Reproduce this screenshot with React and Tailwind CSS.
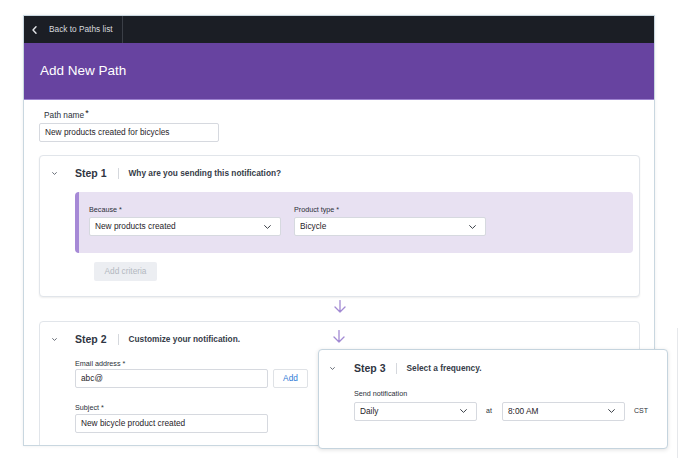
import React from "react";

function Chevron({ w = 7, h = 4, color = "#3a3f47", sw = 1 }) {
  return (
    <svg width={w} height={h} viewBox={`0 0 ${w} ${h}`} className="block">
      <path d={`M0.6 0.6 L${w / 2} ${h - 0.6} L${w - 0.6} 0.6`} fill="none" stroke={color} strokeWidth={sw} strokeLinecap="round" strokeLinejoin="round" />
    </svg>
  );
}

function DownArrow() {
  return (
    <svg width="12" height="13" viewBox="0 0 12 13" className="block">
      <path d="M6 0.5 V12 M1 7 L6 12 L11 7" fill="none" stroke="#a28ad3" strokeWidth="1.3" strokeLinecap="round" strokeLinejoin="round" />
    </svg>
  );
}

function Select({ value, className }) {
  return (
    <div className={`flex items-center justify-between h-[19px] bg-white border border-[#d6d9df] rounded-[2px] pl-[5px] pr-[9px] ${className}`}>
      <span className="text-[8.3px] text-[#1f2329] leading-none">{value}</span>
      <Chevron />
    </div>
  );
}

function Input({ value, className }) {
  return (
    <div className={`flex items-center h-[19px] bg-white border border-[#d6d9df] rounded-[2px] pl-[5px] ${className}`}>
      <span className="text-[8.3px] text-[#1f2329] leading-none">{value}</span>
    </div>
  );
}

function Label({ children, className = "" }) {
  return <div className={`text-[7.2px] leading-[9px] text-[#2a2f38] ${className}`}>{children}</div>;
}

function StepHeader({ n, title }) {
  return (
    <div className="flex items-center h-[12px]">
      <div className="w-[23px] flex items-center">
        <Chevron w={5} h={3} color="#555b66" sw={0.9} />
      </div>
      <span className="text-[10.5px] font-bold text-[#2f3542] leading-none">Step {n}</span>
      <span className="ml-[11px] mr-[10px] w-px h-[11px] bg-[#d5d8dd]" />
      <span className="text-[8.3px] font-bold text-[#363c48] leading-none">{title}</span>
    </div>
  );
}

export default function App() {
  return (
    <div className="relative w-[678px] h-[472px] bg-white overflow-hidden font-['Liberation_Sans',Arial,sans-serif]">
      <div className="ml-[23px] mt-[15px] w-[632px] h-[431px] border border-[#c9d7e0] overflow-hidden flex flex-col shadow-[0_0_3px_rgba(0,0,0,0.08)]">
        <div className="h-[27px] bg-[#1b1e25] flex shrink-0">
          <div className="w-[99px] border-r border-[#3b3f47] flex items-center pl-[8px]">
            <div className="w-[17px]">
              <svg width="5" height="8" viewBox="0 0 5 8" className="block">
                <path d="M4 0.8 L1 4 L4 7.2" fill="none" stroke="#e4e6ea" strokeWidth="1.4" strokeLinecap="round" strokeLinejoin="round" />
              </svg>
            </div>
            <span className="text-[8.3px] text-[#d6d9de] leading-none">Back to Paths list</span>
          </div>
        </div>
        <div className="h-[57px] bg-[#6743a0] border-b border-[#9d82cf] flex items-center pl-[16px] shrink-0">
          <span className="text-[13.5px] text-white leading-none">Add New Path</span>
        </div>
        <div className="flex-1 pl-[15px] pr-[14px] pt-[10px]">
          <div className="pl-[5px] text-[8.3px] leading-[10px] text-[#2a2f38]">
            Path name<span className="text-[#111] text-[9px] relative top-[-2px] ml-[1px]">*</span>
          </div>
          <Input value="New products created for bicycles" className="mt-[3px] w-[180px]" />

          <div className="mt-[13px] border border-[#e1e5ea] rounded-[4px] bg-white shadow-[0_1px_2px_rgba(0,0,0,0.07)] pt-[11px] pb-[15px] pl-[12px] pr-[6px]">
            <StepHeader n={1} title="Why are you sending this notification?" />
            <div className="ml-[23px]">
              <div className="mt-[13px] bg-[#e8e1f2] border-l-[4px] border-[#a689d6] rounded-[4px] pt-[13px] pb-[17px] pl-[10px] flex gap-[13px]">
                <div>
                  <Label>Because *</Label>
                  <Select value="New products created" className="mt-[3px] w-[192px]" />
                </div>
                <div>
                  <Label>Product type *</Label>
                  <Select value="Bicycle" className="mt-[3px] w-[192px]" />
                </div>
              </div>
              <div className="mt-[9px] ml-[19px] w-[63px] h-[19px] bg-[#eceef2] rounded-[2px] flex items-center justify-center">
                <span className="text-[8.3px] text-[#b3b8c0] leading-none">Add criteria</span>
              </div>
            </div>
          </div>

          <div className="h-[24px] pt-[3px] flex justify-center">
            <DownArrow />
          </div>

          <div className="border border-[#e1e5ea] rounded-[4px] bg-white pt-[11px] pb-[20px] pl-[12px] pr-[6px]">
            <StepHeader n={2} title="Customize your notification." />
            <div className="ml-[23px]">
              <Label className="mt-[14px]">Email address *</Label>
              <div className="mt-[1px] flex">
                <Input value="abc@" className="w-[193px]" />
                <div className="ml-[5px] w-[35px] h-[19px] border border-[#dfe2e6] rounded-[2px] bg-white flex items-center justify-center">
                  <span className="text-[8.3px] text-[#2c7ad6] leading-none">Add</span>
                </div>
              </div>
              <Label className="mt-[15px]">Subject *</Label>
              <Input value="New bicycle product created" className="mt-[1.5px] w-[193px]" />
            </div>
          </div>
        </div>
      </div>

      <div className="absolute left-[333px] top-[330px]">
        <DownArrow />
      </div>

      <div className="absolute left-[318px] top-[349px] w-[350px] h-[100px] bg-white border border-[#c5d4de] rounded-[4px] shadow-[0_1px_4px_rgba(0,0,0,0.12)] pt-[12px] pl-[11px]">
        <div className="flex items-center h-[12px]">
          <div className="w-[24px] flex items-center">
            <Chevron w={5} h={3} color="#555b66" sw={0.9} />
          </div>
          <span className="text-[10.5px] font-bold text-[#2f3542] leading-none">Step 3</span>
          <span className="ml-[10px] mr-[10px] w-px h-[11px] bg-[#d5d8dd]" />
          <span className="text-[8.3px] font-bold text-[#363c48] leading-none">Select a frequency.</span>
        </div>
        <div className="ml-[24px]">
          <Label className="mt-[15px]">Send notification</Label>
          <div className="mt-[3.5px] flex items-center">
            <Select value="Daily" className="w-[123px]" />
            <span className="w-[7px] mx-[9px] text-[7px] text-[#2a2f38] leading-none relative top-[-1px]">at</span>
            <Select value="8:00 AM" className="w-[123px]" />
            <span className="ml-[9px] text-[7px] text-[#2a2f38] leading-none relative top-[-1px]">CST</span>
          </div>
        </div>
      </div>

      <div className="absolute left-[677px] top-[328px] w-px h-[130px] bg-[#e6e8eb]" />
    </div>
  );
}
